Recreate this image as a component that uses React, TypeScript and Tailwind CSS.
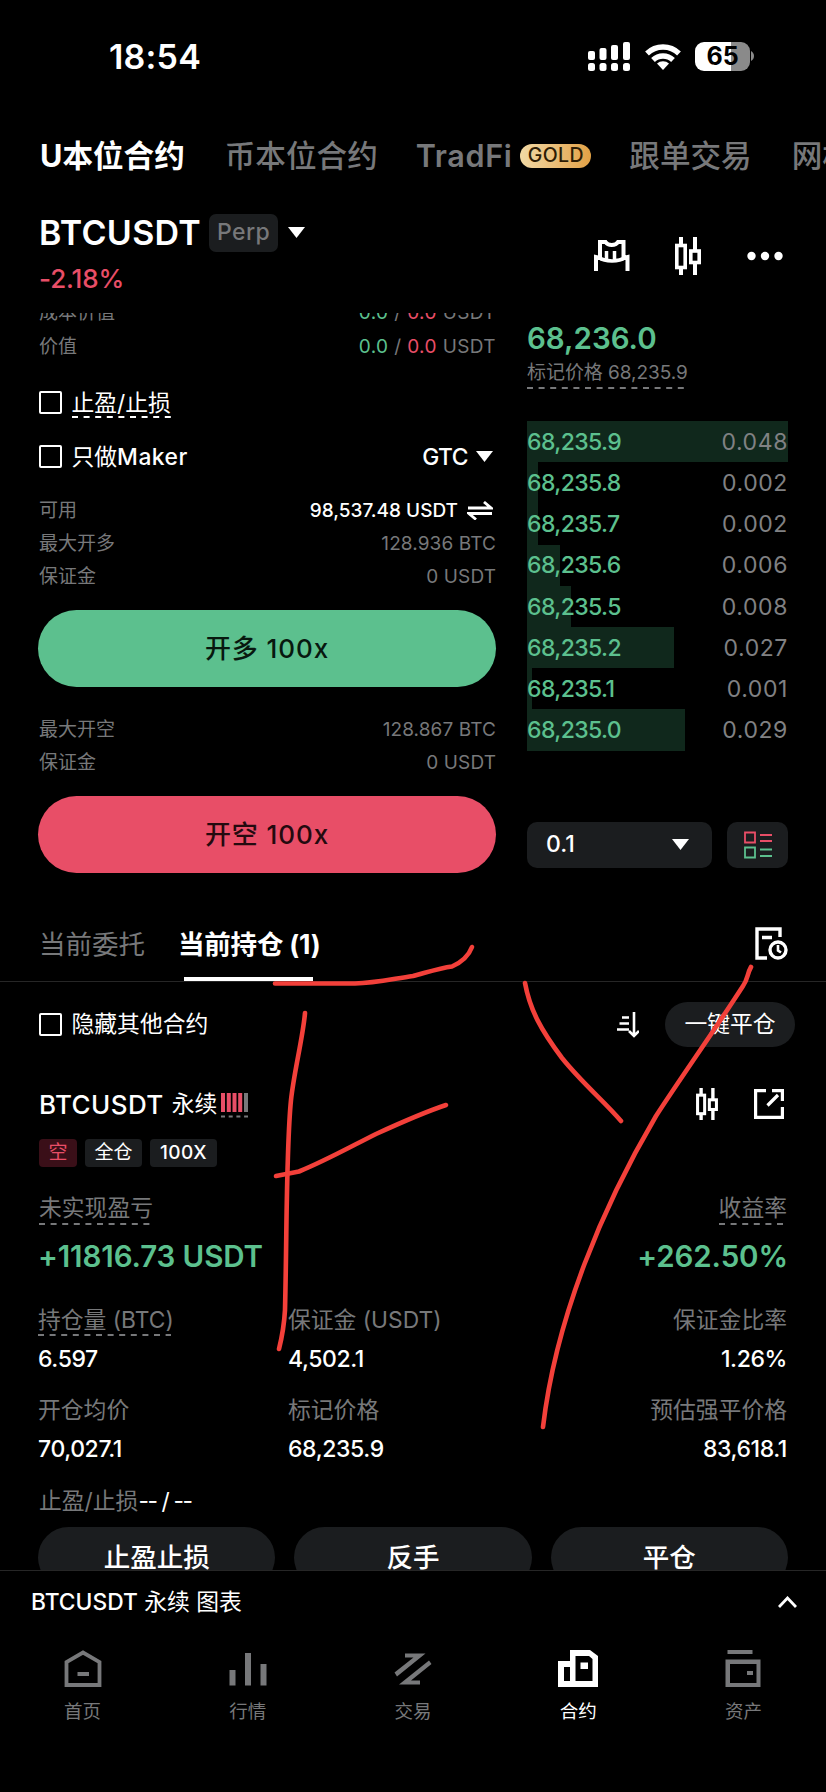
import type { ReactNode } from 'react'

const bids = [
  { price: '68,235.9', size: 0.048 },
  { price: '68,235.8', size: 0.002 },
  { price: '68,235.7', size: 0.002 },
  { price: '68,235.6', size: 0.006 },
  { price: '68,235.5', size: 0.008 },
  { price: '68,235.2', size: 0.027 },
  { price: '68,235.1', size: 0.001 },
  { price: '68,235.0', size: 0.029 },
]

const maxSize = 0.048

const Caret = () => (
  <svg width="17" height="11" viewBox="0 0 17 11" className="shrink-0">
    <path d="M0 0H17L8.5 11Z" fill="#fff" />
  </svg>
)

const Checkbox = () => <span className="ml-[0.5px] h-[23px] w-[23px] shrink-0 rounded-[2px] border-2 border-white" />

const Dashes = ({ className = '' }: { className?: string }) => (
  <svg height="2" className={`absolute left-0 ${className}`}>
    <line x1="0" y1="1" x2="100%" y2="1" stroke="currentColor" strokeWidth="2" strokeDasharray="6 5.6" />
  </svg>
)

const Candles = ({ width, height }: { width: number; height: number }) => (
  <svg width={width} height={height} viewBox="0 0 26 38" fill="none" stroke="#fff" strokeWidth="3.6">
    <path d="M6 0V8M6 31V38M20 0V13M20 26V38" strokeWidth="4" />
    <rect x="1.8" y="8.5" width="8.4" height="22" />
    <rect x="15.8" y="14" width="8.4" height="11.5" />
  </svg>
)

const StatusBar = () => (
  <div className="flex h-[112px] items-center justify-between pl-[109px] pr-[72px]">
    <span className="text-[34px] font-semibold tracking-[0.2px]">18:54</span>
    <div className="flex items-center">
      <svg width="42" height="29" viewBox="0 0 42 29" fill="#fff">
        <rect x="0" y="9" width="7" height="9" rx="2" />
        <rect x="11.5" y="6" width="7" height="12" rx="2" />
        <rect x="23" y="3" width="7" height="15" rx="2" />
        <rect x="35" y="0" width="7" height="18" rx="2" />
        <rect x="0" y="21" width="7" height="8" rx="2.5" />
        <rect x="11.5" y="21" width="7" height="8" rx="2.5" />
        <rect x="23" y="21" width="7" height="8" rx="2.5" />
        <rect x="35" y="21" width="7" height="8" rx="2.5" />
      </svg>
      <svg width="36" height="27" viewBox="0 0 36 27" className="ml-[15px]" fill="none" stroke="#fff" strokeWidth="5.4">
        <path d="M2 10.5A23 23 0 0 1 34 10.5" />
        <path d="M8 17A14.5 14.5 0 0 1 28 17" />
        <path d="M18 27L12 20.5A9 9 0 0 1 24 20.5Z" fill="#fff" stroke="none" />
      </svg>
      <div className="ml-[14px] flex h-[29px] w-[55px] items-center justify-center rounded-[9px] bg-[linear-gradient(90deg,#fff_65%,#8a8a8a_65%)]">
        <span className="text-[25px] font-bold leading-none text-black">65</span>
      </div>
      <svg width="3" height="10" viewBox="0 0 3 10" className="ml-[1px]">
        <path d="M0 0C4 2 4 8 0 10Z" fill="#8a8a8a" />
      </svg>
    </div>
  </div>
)

const ProductTabs = () => (
  <div className="flex h-[88px] items-center overflow-hidden whitespace-nowrap pb-[1px] pl-[40px] text-[30.6px] font-medium text-[#77787a]">
    <span className="font-bold text-white">U本位合约</span>
    <span className="ml-[40px]">币本位合约</span>
    <span className="ml-[38px] font-semibold tracking-[0.6px]">TradFi</span>
    <span className="ml-[8px] flex h-[24px] w-[71px] shrink-0 items-center justify-center rounded-full bg-linear-to-r from-[#f1d9a4] to-[#e2a144] text-[19.5px] tracking-[0.4px] text-[#2c1c04]">
      GOLD
    </span>
    <span className="ml-[38px]">跟单交易</span>
    <span className="ml-[40px]">网格</span>
  </div>
)

const PairHeader = () => (
  <div className="flex h-[113px] items-start justify-between pl-[39px] pr-[43px]">
    <div>
      <div className="mt-[13px] flex h-[39px] items-center">
        <span className="text-[34px] font-semibold tracking-[0.3px]">BTCUSDT</span>
        <span className="ml-[8px] flex h-[38px] w-[69px] items-center justify-center rounded-[7px] bg-[#1b1d1f] text-[23px] font-medium tracking-[0.4px] text-[#77787a]">
          Perp
        </span>
        <span className="ml-[10px]">
          <Caret />
        </span>
      </div>
      <div className="mt-[9px] flex h-[34px] items-center text-[26px] font-medium tracking-[-0.1px] text-[#e84e67]">-2.18%</div>
    </div>
    <div className="mt-[37px] flex items-center">
      <svg width="36" height="38" viewBox="0 0 36 38" fill="none" stroke="#fff" strokeWidth="4">
        <path d="M2 34V20L6 21V5H11.5C14 9 21.5 9 24 5H29.5V21L33.500 20V34" />
        <path d="M5 20.5C11 25 25 25 31 20.5M12.500 14V22M20.500 14V22" strokeWidth="3.5" />
      </svg>
      <span className="ml-[45px]">
        <Candles width={26} height={38} />
      </span>
      <svg width="36" height="10" viewBox="0 0 36 10" fill="#fff" className="ml-[46px]">
        <circle cx="4.5" cy="5" r="4.2" />
        <circle cx="18" cy="5" r="4.2" />
        <circle cx="31.5" cy="5" r="4.2" />
      </svg>
    </div>
  </div>
)

const InfoRow = ({ label, children }: { label: string; children: ReactNode }) => (
  <div className="flex h-[33.2px] items-center justify-between pl-[1px] text-[19px] text-[#77787a]">
    <span>{label}</span>
    <span className="flex items-center tracking-[0.1px]">{children}</span>
  </div>
)

const ValuePair = () => (
  <span className="whitespace-pre tracking-[0.4px]">
    <span className="text-[#5cc08e]">0.0</span> / <span className="text-[#e84e67]">0.0</span> USDT
  </span>
)

const OrderForm = () => (
  <div className="w-[458px]">
    <div className="-mt-[16px]">
      <InfoRow label="成本价值">
        <ValuePair />
      </InfoRow>
      <InfoRow label="价值">
        <ValuePair />
      </InfoRow>
    </div>
    <div className="mt-[13px] flex h-[53px] items-center text-[22.8px]">
      <Checkbox />
      <span className="relative ml-[10px]">
        止盈/止损
        <Dashes className="bottom-[2px] w-[99px]" />
      </span>
    </div>
    <div className="mt-[1px] flex h-[53px] items-center text-[22.8px]">
      <Checkbox />
      <span className="ml-[10px]">
        只做<span className="font-medium tracking-[0.5px]">Maker</span>
      </span>
      <span className="ml-auto mr-[8px] font-medium tracking-[-0.5px]">GTC</span>
      <span className="mr-[3px]">
        <Caret />
      </span>
    </div>
    <div className="mt-[11px]">
      <InfoRow label="可用">
        <span className="font-medium tracking-normal text-white">98,537.48 USDT</span>
        <svg width="26" height="19" viewBox="0 0 26 19" className="ml-[9px] mr-[3px]" fill="none" stroke="#fff" strokeWidth="2.8">
          <path d="M1 7H24L17 1M25 12.5H2L9 18.5" />
        </svg>
      </InfoRow>
      <InfoRow label="最大开多">128.936 BTC</InfoRow>
      <InfoRow label="保证金">0 USDT</InfoRow>
    </div>
    <button className="mt-[16px] flex h-[77px] w-full items-center justify-center rounded-full bg-[#5cc08e] text-[26px] font-medium tracking-[0.9px] text-[#08180f]">
      开多 100x
    </button>
    <div className="mt-[27px]">
      <InfoRow label="最大开空">128.867 BTC</InfoRow>
      <InfoRow label="保证金">0 USDT</InfoRow>
    </div>
    <button className="mt-[16px] flex h-[77px] w-full items-center justify-center rounded-full bg-[#e84e67] text-[26px] font-medium tracking-[0.9px] text-[#240a0f]">
      开空 100x
    </button>
  </div>
)

const OrderBook = () => (
  <div className="w-[261px]">
    <div className="mt-[6px] flex h-[38px] items-center text-[29.5px] font-semibold text-[#5cc08e]">68,236.0</div>
    <div className="relative mt-[2px] flex h-[28px] items-center text-[19px] tracking-[-0.05px] text-[#77787a]">
      标记价格 68,235.9
      <Dashes className="-bottom-[2px] w-[158px]" />
    </div>
    <div className="mt-[34px]">
      {bids.map((bid) => (
        <div key={bid.price} className="relative flex h-[41.2px] items-center justify-between pt-[1px] text-[23px]">
          <div className="absolute inset-y-0 left-0 bg-[#10281c]" style={{ width: `${(bid.size / maxSize) * 100}%` }} />
          <span className="relative font-medium tracking-[-0.6px] text-[#5cc08e]">{bid.price}</span>
          <span className="relative tracking-[0.6px] text-[#808183]">{bid.size.toFixed(3)}</span>
        </div>
      ))}
    </div>
    <div className="mt-[71px] flex h-[46px] gap-[15px]">
      <div className="flex w-[185px] items-center justify-between rounded-[10px] bg-[#1b1d1f] pl-[19px] pr-[23px] text-[23px] font-medium">
        0.1
        <Caret />
      </div>
      <div className="flex w-[61px] items-center justify-center rounded-[10px] bg-[#1b1d1f]">
        <svg width="28" height="28" viewBox="0 0 28 28" fill="none" strokeWidth="1.8">
          <path d="M1 1.5H11V11.5H1ZM16 4H28M16 10H28" stroke="#e84e67" />
          <path d="M1 16.5H11V26.5H1ZM16 18.5H28M16 25H28" stroke="#5cc08e" />
        </svg>
      </div>
    </div>
  </div>
)

const PositionTabs = () => (
  <div className="flex h-[75px] items-start justify-between border-b border-[#262626] pl-[39px] pr-[38px] pt-[18px]">
    <div className="flex text-[26.5px]">
      <span className="flex h-[40px] items-center text-[#77787a]">当前委托</span>
      <span className="relative ml-[33px] flex h-[56px] w-[140px] font-bold">
        <span className="flex h-[40px] items-center whitespace-nowrap tracking-[-0.2px]">当前持仓 (1)</span>
        <span className="absolute bottom-0 left-[6px] h-[4px] w-[129px] bg-white" />
      </span>
    </div>
    <svg width="33" height="33" viewBox="0 0 33 33" fill="none" stroke="#fff" strokeWidth="3.4" className="mt-[2px]">
      <path d="M12 31H2V2H25V10M7 10.5H17" />
      <circle cx="23" cy="23" r="8" />
      <path d="M23 18V23.5L26 25.5" strokeWidth="2.6" />
    </svg>
  </div>
)

const Tag = ({ className = '', children }: { className?: string; children: ReactNode }) => (
  <span className={`flex h-[28px] items-center justify-center rounded-[4px] text-[19px] ${className}`}>{children}</span>
)

const Stat = ({ label, value, align = '', dashed = '' }: { label: string; value: string; align?: string; dashed?: string }) => (
  <div className={`flex flex-col ${align}`}>
    <span className="relative flex h-[36px] items-center text-[22.8px] text-[#77787a]">
      {label}
      {dashed && <Dashes className={`bottom-[2px] ${dashed}`} />}
    </span>
    <span className="flex h-[42px] items-center text-[23px] font-medium tracking-[-0.4px]">{value}</span>
  </div>
)

const Position = () => (
  <div className="h-[588px] overflow-hidden pl-[38px] pr-[38px]">
    <div className="mt-[20px] -mr-[7px] flex h-[45px] items-center text-[22.8px]">
      <Checkbox />
      <span className="ml-[10px]">隐藏其他合约</span>
      <svg width="22" height="26" viewBox="0 0 22 26" fill="none" stroke="#fff" strokeWidth="2.6" className="ml-auto">
        <path d="M5 5.5H12M2.5 11.5H12M0 17.5H12M17 0V24M12 19L17 24L22 19" />
      </svg>
      <button className="ml-[26px] flex h-[45px] w-[130px] items-center justify-center rounded-full bg-[#1b1d1f]">一键平仓</button>
    </div>
    <div className="mt-[40px] flex h-[34px] items-center pl-[1px]">
      <span className="text-[26px] font-medium tracking-[0.4px]">BTCUSDT</span>
      <span className="ml-[8px] text-[22.8px]">永续</span>
      <svg width="28" height="26" viewBox="0 0 28 26" className="ml-[4px] mt-[4px]">
        <path d="M0 0H4V19H0ZM5.8 0H9.8V19H5.8ZM11.5 0H15.5V19H11.5ZM17.2 0H21.2V19H17.2Z" fill="#e84e67" />
        <path d="M23 0H27V19H23Z" fill="#77787a" />
        <path d="M0 23.5H27" stroke="#77787a" strokeWidth="2" strokeDasharray="4 3.7" />
      </svg>
      <span className="ml-auto">
        <Candles width={22} height={32} />
      </span>
      <svg width="30" height="30" viewBox="0 0 30 30" fill="none" stroke="#fff" strokeWidth="3.2" className="ml-[36px] mr-[4px]">
        <path d="M12 1.6H1.6V28.4H28.4V18M18 1.6H28.4V12M13.5 16.5L24 6" />
      </svg>
    </div>
    <div className="mt-[18px] flex gap-[8px] pl-[1px]">
      <Tag className="w-[38px] bg-[#3a0f18] text-[#e84e67]">空</Tag>
      <Tag className="w-[57px] bg-[#1b1d1f]">全仓</Tag>
      <Tag className="w-[67px] bg-[#1b1d1f] font-medium tracking-[0.5px]">100X</Tag>
    </div>
    <div className="mt-[23px] flex h-[36px] items-center justify-between pl-[1px] text-[22.8px] text-[#77787a]">
      <span className="relative">
        未实现盈亏
        <Dashes className="bottom-[0px] w-[111px]" />
      </span>
      <span className="relative mr-[1px]">
        收益率
        <Dashes className="bottom-[0px] w-[64px]" />
      </span>
    </div>
    <div className="mt-[10px] flex h-[40px] items-center justify-between text-[29.5px] font-semibold tracking-[-0.1px] text-[#5cc08e]">
      <span>+11816.73 USDT</span>
      <span>+262.50%</span>
    </div>
    <div className="mt-[26px] grid grid-cols-[250px_250px_249px] gap-y-[12px]">
      <Stat label="持仓量 (BTC)" value="6.597" dashed="w-[133px]" />
      <Stat label="保证金 (USDT)" value="4,502.1" />
      <Stat label="保证金比率" value="1.26%" align="items-end" />
      <Stat label="开仓均价" value="70,027.1" />
      <Stat label="标记价格" value="68,235.9" />
      <Stat label="预估强平价格" value="83,618.1" align="items-end" />
    </div>
    <div className="mt-[15px] flex h-[32px] items-center pl-[1px] text-[22.8px]">
      <span className="text-[#77787a]">止盈/止损</span>
      <span className="tracking-[-1.4px]">-- / --</span>
    </div>
    <div className="mt-[10px] grid grid-cols-3 gap-[19px] text-[26.5px] font-medium">
      <button className="h-[61px] rounded-full bg-[#1b1d1f]">止盈止损</button>
      <button className="h-[61px] rounded-full bg-[#1b1d1f]">反手</button>
      <button className="h-[61px] rounded-full bg-[#1b1d1f]">平仓</button>
    </div>
  </div>
)

const navItems = [
  {
    label: '首页',
    icon: <path d="M2 35V12L18.5 2.5L35 12V35ZM13 24H24.5" fill="none" stroke="currentColor" strokeWidth="3.8" />,
  },
  {
    label: '行情',
    icon: <path d="M0 20H6V35.5H0ZM15.5 3H21.5V35.5H15.5ZM31 14H37V35.5H31Z" fill="currentColor" />,
  },
  {
    label: '交易',
    icon: <path d="M10.5 3.5H31L2.5 26.5L0 22.5L19 7.5H10.5ZM37 14L16.5 30.5H25.5V34.5H4.5L34.5 10.5Z" fill="currentColor" />,
  },
  {
    label: '合约',
    active: true,
    icon: (
      <path
        fillRule="evenodd"
        d="M0 37V11H12V0H32L40 6V37ZM6 17V31H12V17ZM17.5 6V31H34.5V9L31 6ZM22.5 12.5H30V19H22.5Z"
        fill="currentColor"
      />
    ),
  },
  {
    label: '资产',
    icon: (
      <path
        fillRule="evenodd"
        d="M3 0H28V4H3ZM1 9.5H36V37H1ZM5.5 14V33H32V14ZM22.5 21H28.5V25H22.5Z"
        fill="currentColor"
      />
    ),
  },
]

const BottomBar = () => (
  <div className="border-t border-[#262626]">
    <div className="flex h-[61px] items-center justify-between pl-[31px] pr-[29px] pt-[1px] text-[22.8px]">
      <span>
        <span className="font-medium">BTCUSDT</span> 永续 图表
      </span>
      <svg width="19" height="12" viewBox="0 0 19 12" fill="none" stroke="#fff" strokeWidth="2.8">
        <path d="M1 11L9.5 2L18 11" />
      </svg>
    </div>
    <div className="grid grid-cols-5 pt-[18px]">
      {navItems.map((item) => (
        <div key={item.label} className={`flex flex-col items-center ${item.active ? 'text-white' : 'text-[#77787a]'}`}>
          <svg width="40" height="37" viewBox={item.active ? '0 0 40 37' : '-1.5 0 40 37'}>
            {item.icon}
          </svg>
          <span className="mt-[11px] flex h-[28px] items-center text-[18.5px]">{item.label}</span>
        </div>
      ))}
    </div>
  </div>
)

// hand-drawn marks over the position card
const Scribbles = () => (
  <svg
    width="826"
    height="1792"
    viewBox="0 0 826 1792"
    className="pointer-events-none absolute left-0 top-0"
    fill="none"
    stroke="#f3403a"
    strokeWidth="4.6"
    strokeLinecap="round"
    strokeLinejoin="round"
  >
    <path d="M275 983.500H355C375 983 392 979 413 976C428 972 440 968 452 966.500C462 962 469 955 472 947" />
    <path d="M305 1013C303 1037 294 1072 291 1100C286 1150 287 1230 285 1310C284 1328 281 1341 279 1349" />
    <path d="M276 1176L299 1171.500C325 1161 350 1147 376 1134C400 1123 425 1112 446 1105" />
    <path d="M525 983C530 1010 541 1030 562 1058C582 1083 605 1102 621 1121" />
    <path d="M751 967C747 974 748 979 743 986C714 1031 682 1076 656 1116C603 1206 556 1317 543 1427" />
  </svg>
)

export default function App() {
  return (
    <div className="relative h-[1792px] w-[826px] overflow-hidden bg-black font-['Inter','Noto_Sans_CJK_SC',sans-serif] text-white">
      <StatusBar />
      <ProductTabs />
      <PairHeader />
      <div className="flex h-[594px] justify-between overflow-hidden pl-[38px] pr-[38px]">
        <OrderForm />
        <OrderBook />
      </div>
      <PositionTabs />
      <Position />
      <BottomBar />
      <Scribbles />
    </div>
  )
}
